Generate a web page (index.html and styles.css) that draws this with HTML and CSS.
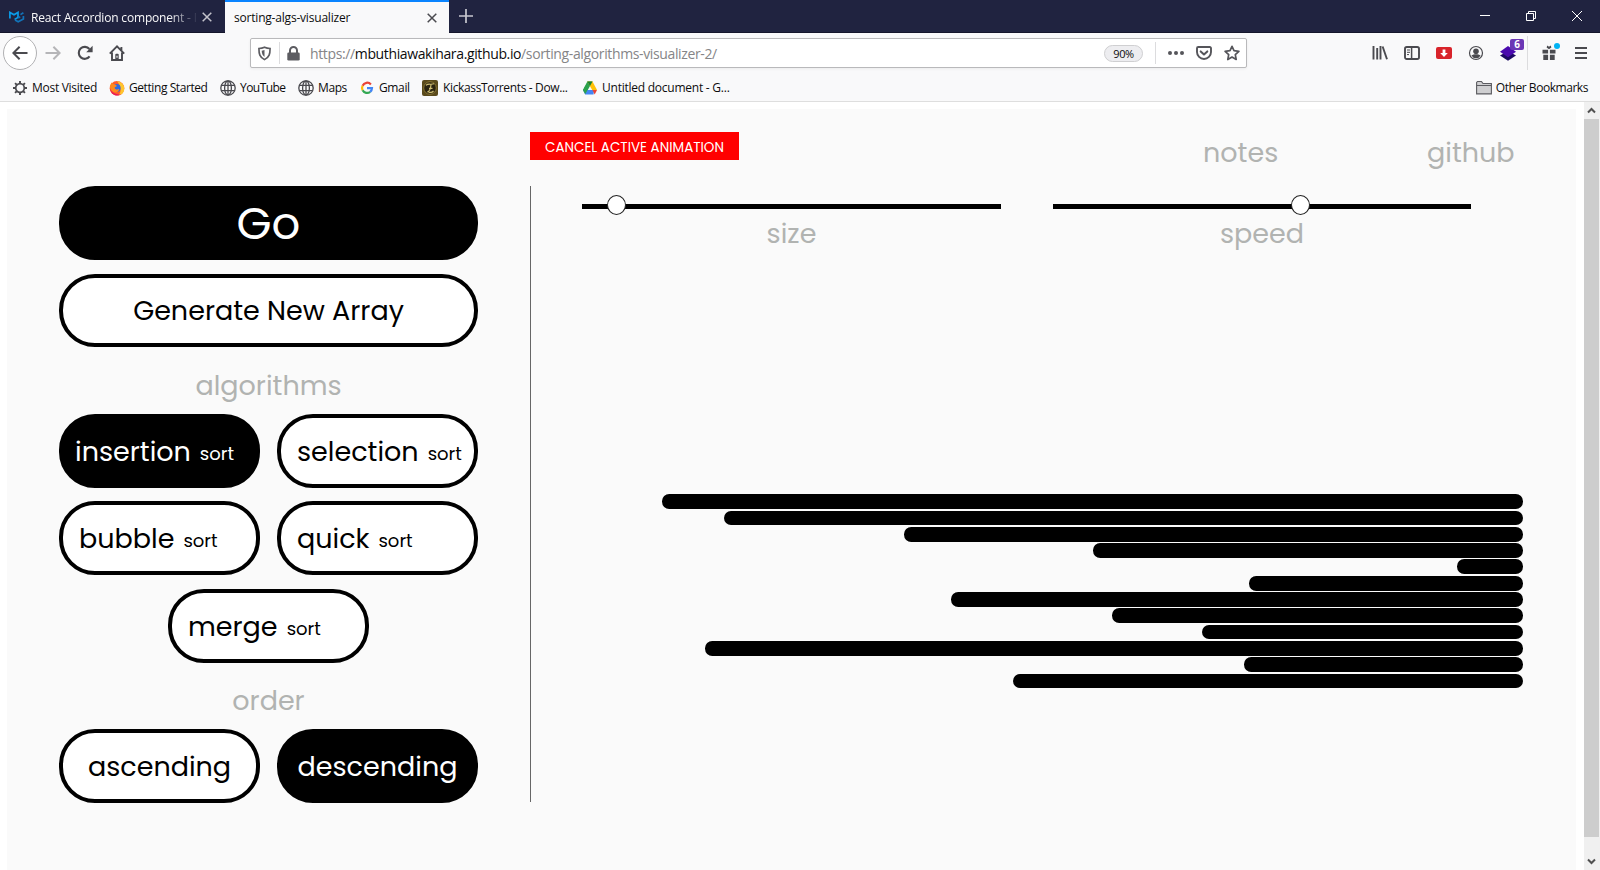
FILE: index.html
```html
<!DOCTYPE html>
<html lang="en">
<head>
<meta charset="utf-8">
<title>sorting-algs-visualizer</title>
<link rel="stylesheet" href="styles.css">
</head>
<body>
<header class="browser">
  <div class="tabbar">
    <div class="tab tab-idle">
      <svg class="tab-logo" viewBox="0 0 16 12" width="16" height="12"><path d="M.9 7.5V1.4L5 3.8l4-2.4v5L5.6 8.5" fill="none" stroke="#0a9be8" stroke-width="1.7"/><path d="M6 9l3.2 1.8L14.4 8V5M11.5 3.6l2.9-1.8M9.2 6.9l2-1.2" fill="none" stroke="#1273b8" stroke-width="1.7"/></svg>
      <span class="tab-title t-react">React Accordion component - M</span>
      <svg class="x-icon" viewBox="0 0 10 10" width="10" height="10"><path d="M.7.7l8.6 8.6M9.3.7L.7 9.3" stroke="#c3c3cb" stroke-width="1.5"/></svg>
    </div>
    <div class="tab tab-active">
      <span class="tab-title t-sorting">sorting-algs-visualizer</span>
      <svg class="x-icon" viewBox="0 0 10 10" width="10" height="10"><path d="M.7.7l8.6 8.6M9.3.7L.7 9.3" stroke="#4a4a4f" stroke-width="1.5"/></svg>
    </div>
    <svg class="new-tab" viewBox="0 0 14 14" width="14" height="14"><path d="M7 0v14M0 7h14" stroke="#c8c8d0" stroke-width="1.7"/></svg>
    <div class="window-controls">
      <svg viewBox="0 0 10 10" width="10" height="10"><path d="M0 4.5h10" stroke="#fff"/></svg>
      <svg viewBox="0 0 10 10" width="10" height="10"><path d="M.5 2.5h7v7h-7zM2.5 2.5v-2h7v7h-2" fill="none" stroke="#fff"/></svg>
      <svg viewBox="0 0 10 10" width="10" height="10"><path d="M0 0l10 10M10 0L0 10" stroke="#fff"/></svg>
    </div>
  </div>

  <div class="toolbar">
    <span class="back"><svg viewBox="0 0 16 16" width="16" height="16"><path d="M15.5 8H1.5M7.6 1.8L1.4 8l6.2 6.2" fill="none" stroke="#4a4a4f" stroke-width="2"/></svg></span>
    <span class="cell"><svg viewBox="0 0 16 16" width="16" height="16"><path d="M.5 8h14M8.4 1.8L14.6 8l-6.2 6.2" fill="none" stroke="#b5b5b8" stroke-width="2"/></svg></span>
    <span class="cell"><svg viewBox="0 0 16 16" width="16" height="16"><path d="M12.6 11.4A6 6 0 1 1 12.4 4" fill="none" stroke="#4a4a4f" stroke-width="2.1"/><path d="M15.6.8v6.4H9.2z" fill="#4a4a4f"/></svg></span>
    <span class="cell"><svg viewBox="0 0 16 16" width="16" height="16"><path d="M.8 8.6L8 1.4l7.2 7.2M3 7.5V15h10V7.5M12.4 5.5V2" fill="none" stroke="#4a4a4f" stroke-width="1.9"/><path d="M6.3 14.5V9.7a1 1 0 0 1 1-1h1.4a1 1 0 0 1 1 1v4.8z" fill="#4a4a4f"/><path d="M8 10.8v2" stroke="#f9f9fa" stroke-width="1.1"/></svg></span>

    <div class="urlbar">
      <span class="url-shield"><svg viewBox="0 0 14 16" width="13" height="15"><path d="M7 1.2c2 .9 4 1.3 6 1.4 0 5.700-.7 9.200-6 12-5.300-2.800-6-6.300-6-12 2-.1 4-.5 6-1.400z" fill="none" stroke="#5c5c61" stroke-width="1.8"/><path d="M7 4.300v7.500c-2-1.500-2.900-3.400-3-6.700z" fill="#5c5c61"/></svg></span>
      <svg class="url-lock" viewBox="0 0 13 15" width="13" height="15"><path d="M3 7V4.500a3.500 3.500 0 0 1 7 0V7" fill="none" stroke="#5c5c61" stroke-width="2"/><rect x=".3" y="6.500" width="12.400" height="8" rx="1.300" fill="#5c5c61"/></svg>
      <span class="url">https://<b>mbuthiawakihara.github.io</b>/sorting-algorithms-visualizer-2/</span>
      <span class="zoom">90%</span>
      <span class="url-actions">
        <svg viewBox="0 0 16 16" width="16" height="16"><g fill="#55555a"><circle cx="2" cy="8" r="2"/><circle cx="8" cy="8" r="2"/><circle cx="14" cy="8" r="2"/></g></svg>
        <svg viewBox="0 0 16 16" width="16" height="16"><path d="M2.200 2h11.600a1.200 1.200 0 0 1 1.200 1.200V7a7 7 0 0 1-14 0V3.200A1.200 1.200 0 0 1 2.200 2z" fill="none" stroke="#55555a" stroke-width="1.900"/><path d="M4.700 6.400L8 9.500l3.300-3.100" fill="none" stroke="#55555a" stroke-width="2" stroke-linecap="round" stroke-linejoin="round"/></svg>
        <svg viewBox="0 0 16 16" width="16" height="16"><path d="M8 1.300l2 4.400 4.900.6-3.600 3.300.9 4.900L8 12.100l-4.200 2.400.9-4.900L1.100 6.300 6 5.700z" fill="none" stroke="#55555a" stroke-width="1.700" stroke-linejoin="round"/></svg>
      </span>
    </div>

    <div class="extensions">
      <span class="cell"><svg viewBox="0 0 16 16" width="16" height="16"><path d="M1.500 1v13.500M5.200 3v11.500M8.500 1v13.500" stroke="#4a4a4f" stroke-width="1.900"/><path d="M10.600 1.500l4.400 12.700" stroke="#4a4a4f" stroke-width="1.900"/></svg></span>
      <span class="cell"><svg viewBox="0 0 16 16" width="16" height="16"><rect x="1" y="2" width="14" height="12" rx="1.800" fill="none" stroke="#4a4a4f" stroke-width="1.900"/><path d="M7.600 2v12" stroke="#4a4a4f" stroke-width="1.500"/><path d="M3 5h3M3 7.300h3M3 9.600h2" stroke="#4a4a4f" stroke-width="1"/></svg></span>
      <span class="cell"><svg viewBox="0 0 16 16" width="16" height="16"><rect x="0" y="2" width="16" height="12" rx="2" fill="#d8232a"/><path d="M6.600 4.500h2.800V8h2.400L8 12 4.200 8h2.400z" fill="#fff"/></svg></span>
      <span class="cell"><svg viewBox="0 0 16 16" width="16" height="16"><circle cx="8" cy="8" r="6.500" fill="none" stroke="#4a4a4f" stroke-width="1.200"/><circle cx="8" cy="6.200" r="2.800" fill="#4a4a4f"/><path d="M3.400 10.500c2.500-1.600 6.700-1.600 9.200 0A5.200 5.200 0 0 1 8 13.200a5.200 5.200 0 0 1-4.600-2.700z" fill="#4a4a4f"/></svg></span>
      <span class="cell stack"><svg viewBox="0 0 16 16" width="16" height="16"><path d="M0 10.500L8 6l8 4.500-8 5.300z" fill="#1d0a63"/><path d="M0 6.700L8 1l8 5.700-8 5.600z" fill="#4a0aae"/></svg><span class="count">6</span></span>
      <span class="divider"></span>
      <span class="cell gift"><svg viewBox="0 0 16 16" width="16" height="16"><path d="M1.500 4.800h5.600v3.700H1.500zM8.900 4.800h5.600v3.700H8.900zM2.300 9.700h4.800V15H2.300zM8.900 9.700h4.800V15H8.900z" fill="#4a4a4f"/><path d="M8 4.300L5.600 2.500 6.300.600 8 1.700 9.700.600l.7 1.900z" fill="#4a4a4f"/></svg><span class="dot"></span></span>
      <span class="cell"><svg viewBox="0 0 12 16" width="12" height="16"><path d="M0 3h12M0 8h12M0 13h12" stroke="#4a4a4f" stroke-width="2"/></svg></span>
    </div>
  </div>

  <div class="bookmarks">
    <span class="bm w-most"><svg viewBox="0 0 16 16" width="16" height="16"><circle cx="8" cy="8" r="4.300" fill="none" stroke="#4a4a4f" stroke-width="1.700"/><path d="M8 1v2.500M8 12.500V15M1 8h2.500M12.500 8H15M3.050 3.050l1.800 1.800M11.150 11.150l1.800 1.800M3.050 12.950l1.800-1.800M11.150 4.850l1.800-1.800" stroke="#4a4a4f" stroke-width="1.900"/></svg><span>Most Visited</span></span>
    <span class="bm w-getting"><svg viewBox="0 0 16 16" width="16" height="16"><circle cx="8" cy="8.300" r="7.300" fill="#ff5a2a"/><path d="M8 1c4.500 1 7.500 3.500 7.300 8-.3 3.500-2.500 6-6 6.500C13 12 12 6 8 1z" fill="#ffc52e"/><circle cx="7.700" cy="8" r="3.900" fill="#2e6be0"/><path d="M.9 7.500C1 5 2 3.500 3 2.300c.3 1.400 1.400 1.900 3.200 2.100L8 5.900 5.600 7.400c.3 2 2.400 2.700 4.600 1.700-.5 2.500-2 3.500-4 3.300C3 12 1.500 10 .9 7.500z" fill="#ff8a1c"/><path d="M.9 8.300c.4 4 3.600 7.300 7.100 7.300 2 0 3.500-.6 4.500-1.500-4 1-9.600-.6-11.600-5.800z" fill="#e8195c"/></svg><span>Getting Started</span></span>
    <span class="bm w-youtube"><svg viewBox="0 0 16 16" width="16" height="16"><g fill="none" stroke="#4a4a4f" stroke-width="1.300"><circle cx="8" cy="8" r="7.200"/><ellipse cx="8" cy="8" rx="3.400" ry="7.200"/><path d="M1.500 5.400h13M1.500 10.600h13M8 1v14"/></g></svg><span>YouTube</span></span>
    <span class="bm w-maps"><svg viewBox="0 0 16 16" width="16" height="16"><g fill="none" stroke="#4a4a4f" stroke-width="1.300"><circle cx="8" cy="8" r="7.200"/><ellipse cx="8" cy="8" rx="3.400" ry="7.200"/><path d="M1.500 5.400h13M1.500 10.600h13M8 1v14"/></g></svg><span>Maps</span></span>
    <span class="bm w-gmail"><svg viewBox="0 0 16 16" width="16" height="16"><g fill="none" stroke-width="2.200"><path d="M11.900 4.400A5 5 0 0 0 3.600 5.700" stroke="#ea4335"/><path d="M3.600 5.700a5 5 0 0 0 0 4.600" stroke="#fbbc05"/><path d="M3.600 10.300a5 5 0 0 0 7.600 1.500" stroke="#34a853"/><path d="M11.200 11.800A4.800 4.800 0 0 0 13 8.100H8" stroke="#4285f4"/></g></svg><span>Gmail</span></span>
    <span class="bm w-kickass"><svg viewBox="0 0 16 16" width="16" height="16"><rect width="16" height="16" rx="2" fill="#5a4a1c"/><circle cx="8" cy="8" r="6.300" fill="#2b2410" stroke="#8d7834" stroke-width="1"/><path d="M4 5.300C6 3.200 9 5 12 3.800M9 4.800C8.700 8 8.300 11.500 5.300 12M6.500 12c2 .8 4 .3 5-1.200M7 8.300h3.500" fill="none" stroke="#d0bf74" stroke-width="1.200"/></svg><span>KickassTorrents - Dow...</span></span>
    <span class="bm w-untitled"><svg viewBox="0 0 16 16" width="16" height="16"><path d="M5.300 1.500h5.200L8 6 3.300 14.500 1 10z" fill="#2ba24c"/><path d="M5.300 1.500h5.200L15 10h-4.800z" fill="#ffc107"/><path d="M5.300 1.500h5.200L8 6z" fill="#188038"/><path d="M3.300 10H12l-.5 4.500H3.300L1 10z" fill="#4285f4"/><path d="M1 10l2.600-4.800L5.600 10l-2.300 4z" fill="#2ba24c"/><path d="M10.400 10H15l-2.300 4.500z" fill="#ea4335"/></svg><span>Untitled document - G...</span></span>
    <span class="bm w-other"><svg viewBox="0 0 16 16" width="16" height="16"><path d="M.6 13.900V2.500L1.500 1.500h4l1.500 2h8.400v10.400z" fill="#cfcfd1" stroke="#5c5c61" stroke-width="1.100"/><path d="M.6 5.500h14.800" stroke="#5c5c61"/></svg><span>Other Bookmarks</span></span>
  </div>
</header>

<main class="viewport">
  <div class="page">
    <section class="controls">
      <button class="pill filled go">Go</button>
      <button class="pill generate">Generate New Array</button>
      <h2 class="label">algorithms</h2>
      <div class="pair">
        <button class="pill filled alg"><span>insertion</span><small>sort</small></button>
        <button class="pill alg"><span>selection</span><small>sort</small></button>
        <button class="pill alg"><span>bubble</span><small>sort</small></button>
        <button class="pill alg"><span>quick</span><small>sort</small></button>
      </div>
      <button class="pill alg merge"><span>merge</span><small>sort</small></button>
      <h2 class="label label-order">order</h2>
      <div class="pair">
        <button class="pill order">ascending</button>
        <button class="pill order filled">descending</button>
      </div>
    </section>

    <section class="visual">
      <div class="topline">
        <button class="cancel">CANCEL ACTIVE ANIMATION</button>
        <nav class="links"><a>notes</a><a>github</a></nav>
      </div>
      <div class="stage">
        <div class="sliders">
          <div class="slider"><div class="track"><span class="thumb" style="left:25px"></span></div><p>size</p></div>
          <div class="slider slider-speed"><div class="track"><span class="thumb" style="left:237.5px"></span></div><p>speed</p></div>
        </div>
        <div class="bars">
          <i style="width:861px"></i>
          <i style="width:799px"></i>
          <i style="width:619px"></i>
          <i style="width:430px"></i>
          <i style="width:66px"></i>
          <i style="width:274px"></i>
          <i style="width:572px"></i>
          <i style="width:411px"></i>
          <i style="width:321px"></i>
          <i style="width:818px"></i>
          <i style="width:279px"></i>
          <i style="width:510px"></i>
        </div>
      </div>
    </section>
  </div>
  <div class="scrollbar">
    <svg viewBox="0 0 15 17" width="15" height="17"><path d="M4 10.500L7.500 7l3.500 3.500" fill="none" stroke="#505050" stroke-width="2"/></svg>
    <span class="scroll-thumb"></span>
    <svg viewBox="0 0 15 17" width="15" height="17"><path d="M4 6.500L7.500 10 11 6.500" fill="none" stroke="#505050" stroke-width="2"/></svg>
  </div>
</main>
</body>
</html>
```
FILE: styles.css
```css
* { box-sizing: border-box; }

body {
  margin: 0;
  width: 1600px;
  height: 870px;
  overflow: hidden;
  background: #fff;
  display: flex;
  flex-direction: column;
}

svg { display: block; flex: none; }

/* ---------- browser chrome ---------- */
.browser {
  height: 102px;
  background: #f9f9fa;
  border-bottom: 1px solid #dedede;
  font: 12px/16px "Segoe UI", "Open Sans", "Noto Sans", sans-serif;
  color: #0c0c0d;
}

.tabbar {
  height: 33px;
  display: flex;
  align-items: center;
  background: #202340;
  border-bottom: 1px solid #14162b;
}
.tab { height: 33px; display: flex; align-items: center; padding-top: 2px; margin-bottom: -1px; }
.tab-idle { width: 225px; padding-left: 9px; color: #f9f9fa; border-bottom: 1px solid #14162b; }
.tab-active { width: 224px; padding-left: 9px; background: #f9f9fa; border-top: 2px solid #0a84ff; padding-top: 0; }
.tab-title { flex: none; white-space: nowrap; overflow: hidden; }
.tab-logo { margin-right: 6px; }
.t-react {
  width: 165px;
  margin-right: 6px;
  padding-top: 1px;
  letter-spacing: -0.18px;
  -webkit-mask-image: linear-gradient(to right, #000 138px, transparent 168px);
  mask-image: linear-gradient(to right, #000 138px, transparent 168px);
}
.t-sorting { width: 193px; letter-spacing: -0.2px; }
.new-tab { margin-left: 10px; }
.window-controls { display: flex; gap: 36px; margin-left: auto; padding-right: 18px; }

.toolbar { height: 40px; display: flex; align-items: center; padding-left: 3px; }
.back {
  width: 34px;
  height: 34px;
  border: 1px solid #b1b1b3;
  border-radius: 50%;
  background: #fff;
  display: flex;
  align-items: center;
  justify-content: center;
}
.cell { width: 32px; height: 32px; display: flex; align-items: center; justify-content: center; position: relative; }

.urlbar {
  width: 997px;
  height: 30px;
  margin-left: 117px;
  display: flex;
  align-items: center;
  background: #fff;
  border: 1px solid #b9b9bb;
  border-radius: 2px;
  box-shadow: 0 1px 3px rgba(0, 0, 0, 0.06);
}
.url-shield { width: 29px; height: 22px; padding-left: 7px; display: flex; align-items: center; border-right: 1px solid #dcdcde; }
.url-lock { margin-left: 7px; }
.url { margin-left: 10px; width: 794px; padding-top: 1px; font-size: 14px; line-height: 18px; letter-spacing: -0.37px; color: #858587; white-space: nowrap; }
.url b { font-weight: 400; color: #0c0c0d; }
.zoom {
  width: 39px;
  height: 17px;
  border: 1px solid #cfcfd1;
  border-radius: 9px;
  background: #ededf0;
  font-size: 11px;
  line-height: 16px;
  letter-spacing: -0.4px;
  text-align: center;
}
.url-actions { display: flex; gap: 12px; margin-left: 12px; height: 22px; padding-left: 12px; align-items: center; border-left: 1px solid #dcdcde; }

.extensions { display: flex; align-items: center; margin-left: 117px; }
.count {
  position: absolute;
  left: 18px;
  top: 2px;
  width: 14px;
  height: 11px;
  border-radius: 2px;
  background: #6b36b5;
  color: #fff;
  font-size: 10px;
  font-weight: 700;
  line-height: 11px;
  text-align: center;
}
.divider { width: 1px; height: 34px; margin: 0 5px 0 3px; background: #dcdcde; }
.dot { position: absolute; left: 21px; top: 6px; width: 6px; height: 6px; border-radius: 50%; background: #00b3f4; }

.bookmarks { height: 28px; display: flex; align-items: center; padding: 1px 0 0 12px; }
.bm { display: flex; align-items: center; gap: 4px; white-space: nowrap; }
.w-most { width: 97px; letter-spacing: -0.28px; }
.w-getting { width: 111px; letter-spacing: -0.42px; }
.w-youtube { width: 78px; letter-spacing: -0.55px; }
.w-maps { width: 61px; letter-spacing: -0.4px; }
.w-gmail { width: 63px; letter-spacing: -0.37px; }
.w-kickass { width: 160px; gap: 5px; letter-spacing: -0.35px; }
.w-untitled { letter-spacing: -0.24px; }
.w-other { margin-left: auto; margin-right: 12px; letter-spacing: -0.45px; }

/* ---------- page ---------- */
.viewport { flex: 1; display: flex; justify-content: space-between; padding-left: 7px; }
.page {
  width: 1569px;
  margin-top: 7px;
  display: flex;
  background: #fafafa;
  font: 27px/44px Poppins, sans-serif;
}
.controls { width: 523px; padding: 77px 52px 0; }

.pill {
  display: block;
  width: 100%;
  height: 74px;
  padding: 0;
  border: 4px solid #000;
  border-radius: 36px;
  background: #fff;
  color: #000;
  font: inherit;
  text-align: center;
  white-space: nowrap;
}
.filled { background: #000; color: #fff; }
.go { font-size: 45px; padding-top: 2px; margin-bottom: 14px; }
.generate { height: 73px; }
.label {
  height: 67px;
  margin: 0;
  padding-top: 17px;
  font: inherit;
  color: #b1b3b1;
  text-align: center;
}
.label-order { height: 66px; padding-top: 16px; }
.pair { display: grid; grid-template-columns: 201px 201px; gap: 13px 17px; }
.order { padding-top: 2px; }
.alg { display: flex; align-items: flex-start; padding: 12px 0 0 16px; }
.alg.filled { padding-left: 12px; }
.alg small { font-size: 18px; line-height: 48px; margin-left: 9px; }
.merge { width: 201px; margin: 14px auto 0; }

.topline { height: 77px; display: flex; padding-top: 22px; }
.cancel {
  width: 209px;
  height: 28px;
  margin-top: 1px;
  padding: 3px 0 0;
  border: 0;
  background: #f00;
  color: #fff;
  font: 13.5px/20px Poppins, sans-serif;
}
.links { display: flex; margin-left: 464px; color: #b1b3b1; }
.links a:first-child { width: 224px; }

.stage { width: 993px; height: 616px; border-left: 1px solid #666; }
.sliders { display: flex; gap: 52px; height: 68px; padding: 18px 0 0 51px; }
.slider { width: 419px; }
.slider-speed { width: 418px; }
.track { position: relative; height: 5px; background: #000; }
.thumb {
  position: absolute;
  top: -9px;
  width: 19px;
  height: 20px;
  border: 1px solid #222;
  border-radius: 50%;
  background: #fff;
}
.slider p { margin: 3px 0 0; color: #b1b3b1; text-align: center; }
.bars { display: flex; flex-direction: column; align-items: flex-end; gap: 1.52px; padding-top: 240.1875px; }
.bars i { height: 14.8px; border-radius: 7.2px; background: #000; }

.scrollbar { width: 16px; padding-right: 1px; background: #f0f0f0; display: flex; flex-direction: column; justify-content: space-between; }
.scroll-thumb { height: 718px; margin-bottom: 16px; background: #cdcdcd; }
```
